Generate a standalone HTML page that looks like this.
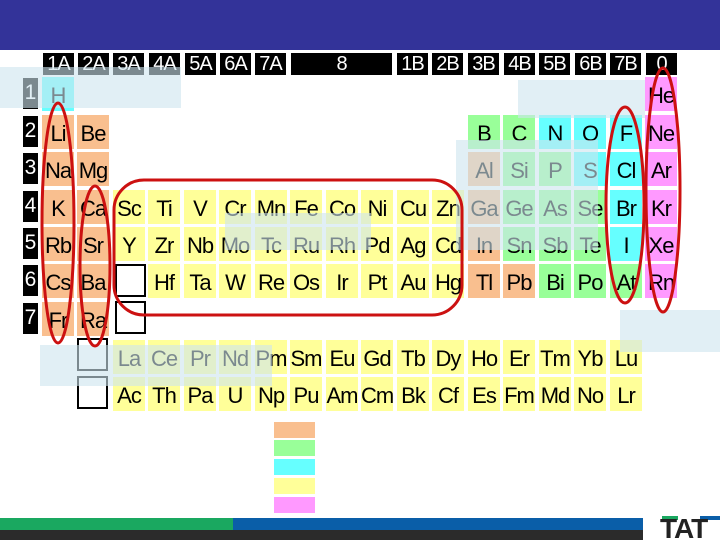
<!DOCTYPE html>
<html><head><meta charset="utf-8"><style>
*{margin:0;padding:0;box-sizing:border-box}
body{width:720px;height:540px;position:relative;overflow:hidden;background:#fff;font-family:"Liberation Sans",Arial,sans-serif}
div{position:absolute}
.e{width:32px;height:34px;font-size:22px;line-height:37px;text-align:center;color:#000;letter-spacing:-1px;white-space:nowrap}
.o{background:#f9bf8f}.y{background:#ffff99}.g{background:#99ff99}.c{background:#66ffff}.p{background:#ff99ff}
.h{top:53px;height:22px;background:#000;color:#fff;font-size:20px;line-height:22px;text-align:center;width:31px;letter-spacing:-1px}
.r{left:23px;width:15px;height:31px;background:#000;color:#fff;font-size:21px;line-height:30px;text-align:center}
.b{width:31px;height:33px;border:2px solid #000;background:#fff}
.ov{background:rgba(205,228,238,0.6)}
</style></head><body>
<div style="left:0;top:0;width:720px;height:50px;background:#333399"></div>

<div class="h" style="left:43px">1A</div><div class="h" style="left:78px">2A</div><div class="h" style="left:113px">3A</div><div class="h" style="left:149px">4A</div><div class="h" style="left:185px">5A</div><div class="h" style="left:220px">6A</div><div class="h" style="left:255px">7A</div>
<div class="h" style="left:291px;width:101px">8</div>
<div class="h" style="left:397px">1B</div><div class="h" style="left:432px">2B</div><div class="h" style="left:468px">3B</div><div class="h" style="left:504px">4B</div><div class="h" style="left:539px">5B</div><div class="h" style="left:575px">6B</div><div class="h" style="left:610px">7B</div><div class="h" style="left:646px">0</div>

<div class="r" style="top:78px">1</div><div class="r" style="top:116px">2</div><div class="r" style="top:153px">3</div><div class="r" style="top:191px">4</div><div class="r" style="top:228px">5</div><div class="r" style="top:265px">6</div><div class="r" style="top:303px">7</div>

<div class="e c" style="left:42px;top:77px">H</div><div class="e p" style="left:645px;top:77px">He</div>
<div class="e o" style="left:42px;top:115px">Li</div><div class="e o" style="left:77px;top:115px">Be</div>
<div class="e g" style="left:468px;top:115px">B</div><div class="e g" style="left:503px;top:115px">C</div><div class="e c" style="left:539px;top:115px">N</div><div class="e c" style="left:574px;top:115px">O</div><div class="e c" style="left:610px;top:115px">F</div><div class="e p" style="left:645px;top:115px">Ne</div>
<div class="e o" style="left:42px;top:152px">Na</div><div class="e o" style="left:77px;top:152px">Mg</div>
<div class="e o" style="left:468px;top:152px">Al</div><div class="e g" style="left:503px;top:152px">Si</div><div class="e g" style="left:539px;top:152px">P</div><div class="e c" style="left:574px;top:152px">S</div><div class="e c" style="left:610px;top:152px">Cl</div><div class="e p" style="left:645px;top:152px">Ar</div>
<div class="e o" style="left:42px;top:190px">K</div><div class="e o" style="left:77px;top:190px">Ca</div>
<div class="e y" style="left:113px;top:190px">Sc</div><div class="e y" style="left:148px;top:190px">Ti</div><div class="e y" style="left:184px;top:190px">V</div><div class="e y" style="left:219px;top:190px">Cr</div><div class="e y" style="left:255px;top:190px">Mn</div><div class="e y" style="left:290px;top:190px">Fe</div><div class="e y" style="left:326px;top:190px">Co</div><div class="e y" style="left:361px;top:190px">Ni</div><div class="e y" style="left:397px;top:190px">Cu</div><div class="e y" style="left:432px;top:190px">Zn</div>
<div class="e o" style="left:468px;top:190px">Ga</div><div class="e g" style="left:503px;top:190px">Ge</div><div class="e g" style="left:539px;top:190px">As</div><div class="e g" style="left:574px;top:190px">Se</div><div class="e c" style="left:610px;top:190px">Br</div><div class="e p" style="left:645px;top:190px">Kr</div>
<div class="e o" style="left:42px;top:227px">Rb</div><div class="e o" style="left:77px;top:227px">Sr</div>
<div class="e y" style="left:113px;top:227px">Y</div><div class="e y" style="left:148px;top:227px">Zr</div><div class="e y" style="left:184px;top:227px">Nb</div><div class="e y" style="left:219px;top:227px">Mo</div><div class="e y" style="left:255px;top:227px">Tc</div><div class="e y" style="left:290px;top:227px">Ru</div><div class="e y" style="left:326px;top:227px">Rh</div><div class="e y" style="left:361px;top:227px">Pd</div><div class="e y" style="left:397px;top:227px">Ag</div><div class="e y" style="left:432px;top:227px">Cd</div>
<div class="e o" style="left:468px;top:227px">In</div><div class="e g" style="left:503px;top:227px">Sn</div><div class="e g" style="left:539px;top:227px">Sb</div><div class="e g" style="left:574px;top:227px">Te</div><div class="e c" style="left:610px;top:227px">I</div><div class="e p" style="left:645px;top:227px">Xe</div>
<div class="e o" style="left:42px;top:264px">Cs</div><div class="e o" style="left:77px;top:264px">Ba</div>
<div class="b" style="left:115px;top:264px"></div>
<div class="e y" style="left:148px;top:264px">Hf</div><div class="e y" style="left:184px;top:264px">Ta</div><div class="e y" style="left:219px;top:264px">W</div><div class="e y" style="left:255px;top:264px">Re</div><div class="e y" style="left:290px;top:264px">Os</div><div class="e y" style="left:326px;top:264px">Ir</div><div class="e y" style="left:361px;top:264px">Pt</div><div class="e y" style="left:397px;top:264px">Au</div><div class="e y" style="left:432px;top:264px">Hg</div>
<div class="e o" style="left:468px;top:264px">Tl</div><div class="e o" style="left:503px;top:264px">Pb</div><div class="e g" style="left:539px;top:264px">Bi</div><div class="e g" style="left:574px;top:264px">Po</div><div class="e g" style="left:610px;top:264px">At</div><div class="e p" style="left:645px;top:264px">Rn</div>
<div class="e o" style="left:42px;top:302px">Fr</div><div class="e o" style="left:77px;top:302px">Ra</div>
<div class="b" style="left:115px;top:301px"></div>
<div class="b" style="left:77px;top:338px"></div><div class="b" style="left:77px;top:376px"></div>
<div class="e y" style="left:113px;top:340px">La</div><div class="e y" style="left:148px;top:340px">Ce</div><div class="e y" style="left:184px;top:340px">Pr</div><div class="e y" style="left:219px;top:340px">Nd</div><div class="e y" style="left:255px;top:340px">Pm</div><div class="e y" style="left:290px;top:340px">Sm</div><div class="e y" style="left:326px;top:340px">Eu</div><div class="e y" style="left:361px;top:340px">Gd</div><div class="e y" style="left:397px;top:340px">Tb</div><div class="e y" style="left:432px;top:340px">Dy</div><div class="e y" style="left:468px;top:340px">Ho</div><div class="e y" style="left:503px;top:340px">Er</div><div class="e y" style="left:539px;top:340px">Tm</div><div class="e y" style="left:574px;top:340px">Yb</div><div class="e y" style="left:610px;top:340px">Lu</div>
<div class="e y" style="left:113px;top:377px">Ac</div><div class="e y" style="left:148px;top:377px">Th</div><div class="e y" style="left:184px;top:377px">Pa</div><div class="e y" style="left:219px;top:377px">U</div><div class="e y" style="left:255px;top:377px">Np</div><div class="e y" style="left:290px;top:377px">Pu</div><div class="e y" style="left:326px;top:377px">Am</div><div class="e y" style="left:361px;top:377px">Cm</div><div class="e y" style="left:397px;top:377px">Bk</div><div class="e y" style="left:432px;top:377px">Cf</div><div class="e y" style="left:468px;top:377px">Es</div><div class="e y" style="left:503px;top:377px">Fm</div><div class="e y" style="left:539px;top:377px">Md</div><div class="e y" style="left:574px;top:377px">No</div><div class="e y" style="left:610px;top:377px">Lr</div>

<div class="ov" style="left:0;top:67px;width:181px;height:41px"></div>
<div class="ov" style="left:518px;top:80px;width:127px;height:38px"></div>
<div class="ov" style="left:456px;top:140px;width:142px;height:110px"></div>
<div class="ov" style="left:225px;top:213px;width:146px;height:37px"></div>
<div class="ov" style="left:40px;top:345px;width:232px;height:41px"></div>
<div class="ov" style="left:620px;top:310px;width:100px;height:42px"></div>

<svg style="position:absolute;left:0;top:0" width="720" height="540">
<g fill="none" stroke="#cc1111" stroke-width="3">
<ellipse cx="58" cy="223" rx="16" ry="120"/>
<ellipse cx="95" cy="266" rx="15" ry="80"/>
<rect x="114" y="180" width="348" height="135" rx="30"/>
<ellipse cx="625" cy="205" rx="19" ry="98"/>
<ellipse cx="663" cy="190" rx="17" ry="122"/>
</g></svg>

<div class="o" style="left:274px;top:422px;width:41px;height:16px"></div>
<div class="g" style="left:274px;top:440px;width:41px;height:16px"></div>
<div class="c" style="left:274px;top:459px;width:41px;height:16px"></div>
<div class="y" style="left:274px;top:478px;width:41px;height:16px"></div>
<div class="p" style="left:274px;top:497px;width:41px;height:16px"></div>

<div style="left:0;top:518px;width:233px;height:12px;background:#1aa860"></div>
<div style="left:233px;top:518px;width:410px;height:12px;background:#0a5ea8"></div>
<div style="left:0;top:530px;width:643px;height:10px;background:#2b2b2b"></div>
<div style="left:662px;top:516px;width:16px;height:4px;background:#1aa860"></div>
<div style="left:700px;top:516px;width:20px;height:4px;background:#0a5ea8"></div>
<div style="left:660px;top:514px;font-size:28px;font-weight:bold;color:#222;letter-spacing:-1px;line-height:30px">TAT</div>
</body></html>
